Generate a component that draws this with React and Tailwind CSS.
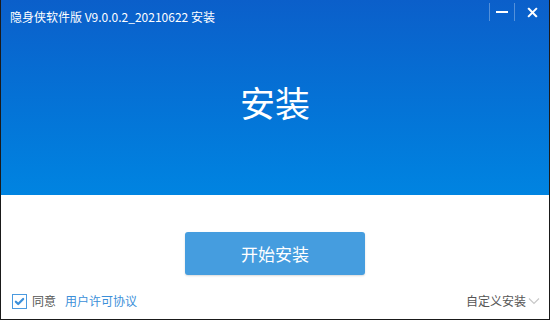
export default function App() {
  return (
    <div
      className="flex h-[320px] w-[550px] flex-col overflow-hidden border-x border-b border-[#1a1a1a] bg-white"
      style={{ fontFamily: '"Microsoft YaHei", "Noto Sans CJK SC", "Liberation Sans", sans-serif' }}
    >
      {/* Header */}
      <div className="flex h-[195px] shrink-0 flex-col bg-gradient-to-b from-[#0b5fca] to-[#0084e1]">
        <div className="flex h-[34px] items-start">
          <div className="flex-1 pl-[9px] pt-[8px] text-[12px] leading-[18px] text-white">
            隐身侠软件版 V9.0.0.2_20210622 安装
          </div>
          <div className="mt-[3px] h-[18px] w-px bg-white/30" />
          <button type="button" className="flex h-[24px] w-[24px] items-center justify-center">
            <span className="block h-[2px] w-[12px] bg-white" />
          </button>
          <div className="mt-[3px] h-[18px] w-px bg-white/30" />
          <button type="button" className="flex h-[24px] w-[34px] items-center justify-center text-white">
            <svg viewBox="0 0 12 12" className="h-[11px] w-[11px]" fill="none" stroke="currentColor" strokeWidth="2.2" strokeLinecap="square">
              <path d="M2 2l8 8M10 2l-8 8" />
            </svg>
          </button>
        </div>
        <div className="flex flex-1 items-start justify-center pt-[46px] text-[35px] leading-[44px] text-white">
          安装
        </div>
      </div>

      {/* Body */}
      <div className="flex flex-1 flex-col">
        <div className="flex justify-center pt-[37px]">
          <button
            type="button"
            className="h-[43px] w-[180px] rounded-[3px] bg-[#459ddf] text-[17px] text-white shadow-[0_1px_2px_rgba(0,0,0,0.15)]"
          >
            开始安装
          </button>
        </div>
        <div className="mt-auto flex items-center pb-[10px] pl-[11px] pr-[9px] text-[12px] leading-[16px]">
          <span className="flex h-[15px] w-[15px] items-center justify-center border border-[#4a9ae0] bg-white">
            <svg viewBox="0 0 12 12" className="h-[11px] w-[11px]" fill="none" stroke="#3b8fd9" strokeWidth="2.4" strokeLinecap="round" strokeLinejoin="round">
              <path d="M2 6.2l2.6 2.6L10 3.2" />
            </svg>
          </span>
          <span className="ml-[5px] text-[#555]">同意</span>
          <span className="ml-[9px] text-[#3b8fd9]">用户许可协议</span>
          <span className="ml-auto text-[#555]">自定义安装</span>
          <svg viewBox="0 0 12 8" className="ml-[2px] h-[8px] w-[12px]" fill="none" stroke="#c8c8c8" strokeWidth="1.2">
            <path d="M1 1.5l5 5 5-5" />
          </svg>
        </div>
      </div>
    </div>
  );
}
